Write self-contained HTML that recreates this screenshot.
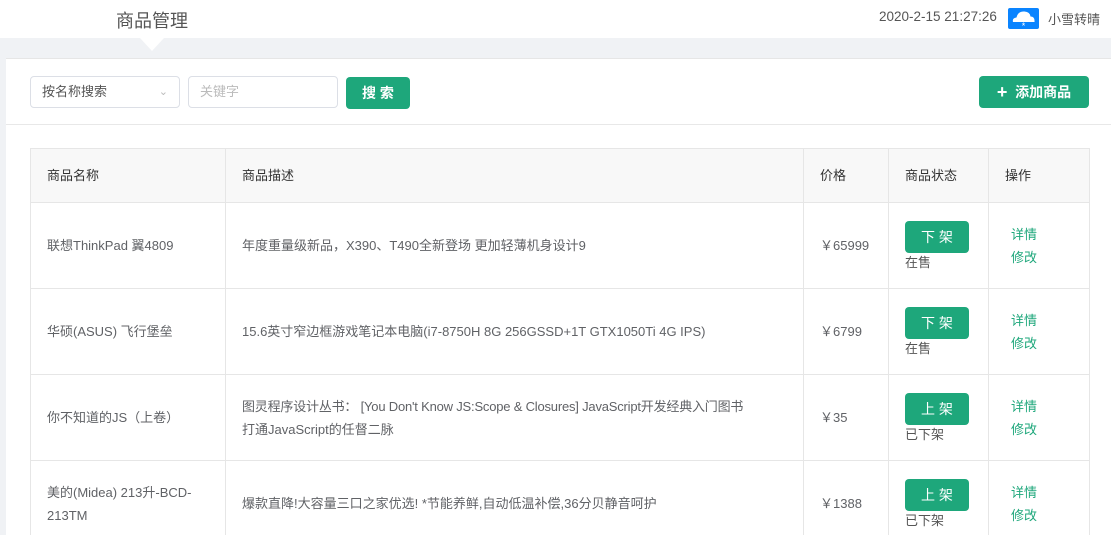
<!DOCTYPE html>
<html><head><meta charset="utf-8"><style>
*{box-sizing:border-box;margin:0;padding:0}
html,body{width:1111px;height:535px;overflow:hidden}
body{background:#f0f2f5;font-family:"Liberation Sans","Noto Sans CJK SC",sans-serif;color:#606266;font-size:13px;position:relative}
.top{position:absolute;left:0;top:0;width:1111px;height:38px;background:#fff}
.title{position:absolute;left:116px;top:7px;font-size:18px;color:#555}
.tri{position:absolute;left:140px;top:38px;width:0;height:0;border-left:12px solid transparent;border-right:12px solid transparent;border-top:13px solid #fff}
.time{position:absolute;left:879px;top:9px;font-size:13.5px;color:#555}
.wx{position:absolute;left:1048px;top:9px;font-size:13px;color:#555}
.panel{position:absolute;left:6px;top:58px;width:1105px;height:490px;background:#fff;border-top:1px solid #e6e6e6}
.bar{position:absolute;left:0;top:65px;width:1105px;height:1px;background:#e8e8e8}
.sel,.inp{position:absolute;top:17px;height:32px;border:1px solid #dcdfe6;border-radius:4px;font-size:13px;padding:0 11px;line-height:30px}
.sel{left:24px;width:150px;color:#555}
.inp{left:182px;width:150px;color:#bbb}
.btn{position:absolute;background:#1ea77b;color:#fff;border-radius:4px;text-align:center;font-size:14px;font-weight:bold}
table{position:absolute;left:24px;top:89px;width:1059px;border-collapse:collapse;table-layout:fixed;border:1px solid #e6e6e6}
td,th{border:1px solid #e6e6e6;text-align:left;padding:0 16px;font-weight:normal;font-size:13px;line-height:23px;vertical-align:middle}
th{height:54px;background:#f8f8f8;color:#333}
td{height:86px}
.op{color:#1ea77b;padding-left:22px}
.sb{display:block;width:64px;height:32px;line-height:32px;background:#1ea77b;color:#fff;border-radius:4px;text-align:center;font-size:14px;margin-top:2px}
.st{display:block;line-height:20px;color:#555}
</style></head><body>
<div class="top"></div>
<div class="title">商品管理</div>
<div class="tri"></div>
<div class="time">2020-2-15 21:27:26</div>
<svg style="position:absolute;left:1008px;top:8px" width="31" height="21" viewBox="0 0 31 21"><rect width="31" height="21" rx="2" fill="#0a84ff"/><path d="M5 14 Q4 10 8.5 9.5 Q10 3 16.5 3.5 Q22 4 22.5 8.5 Q27 8.5 26.5 14 Z" fill="#fff"/><text x="15.5" y="21" font-size="9" fill="#fff" text-anchor="middle" font-family="Liberation Sans">*</text></svg>
<div class="wx">小雪转晴</div>
<div class="panel">
<div class="sel">按名称搜索<span style="position:absolute;right:11px;top:0;color:#bbb;font-size:11px">&#8964;</span></div>
<div class="inp">关键字</div>
<div class="btn" style="left:340px;top:18px;width:64px;height:32px;line-height:32px">搜 索</div>
<div class="btn" style="left:973px;top:17px;width:110px;height:32px;line-height:32px"><span style="font-size:18px;font-weight:bold;vertical-align:-1px">+</span>&nbsp; 添加商品</div>
<div class="bar"></div>
<table>
<colgroup><col style="width:195px"><col style="width:578px"><col style="width:85px"><col style="width:100px"><col style="width:101px"></colgroup>
<tr><th>商品名称</th><th>商品描述</th><th>价格</th><th>商品状态</th><th>操作</th></tr>
<tr><td>联想ThinkPad 翼4809</td><td>年度重量级新品，X390、T490全新登场 更加轻薄机身设计9</td><td>￥65999</td><td><span class="sb">下 架</span><span class="st">在售</span></td><td class="op">详情<br>修改</td></tr>
<tr><td>华硕(ASUS) 飞行堡垒</td><td>15.6英寸窄边框游戏笔记本电脑(i7-8750H 8G 256GSSD+1T GTX1050Ti 4G IPS)</td><td>￥6799</td><td><span class="sb">下 架</span><span class="st">在售</span></td><td class="op">详情<br>修改</td></tr>
<tr><td>你不知道的JS（上卷）</td><td><span style="white-space:nowrap;letter-spacing:-0.2px">图灵程序设计丛书： [You Don't Know JS:Scope &amp; Closures] JavaScript开发经典入门图书</span><br>打通JavaScript的任督二脉</td><td>￥35</td><td><span class="sb">上 架</span><span class="st">已下架</span></td><td class="op">详情<br>修改</td></tr>
<tr><td>美的(Midea) 213升-BCD-213TM</td><td>爆款直降!大容量三口之家优选! *节能养鲜,自动低温补偿,36分贝静音呵护</td><td>￥1388</td><td><span class="sb">上 架</span><span class="st">已下架</span></td><td class="op">详情<br>修改</td></tr>
</table>
</div>
</body></html>
